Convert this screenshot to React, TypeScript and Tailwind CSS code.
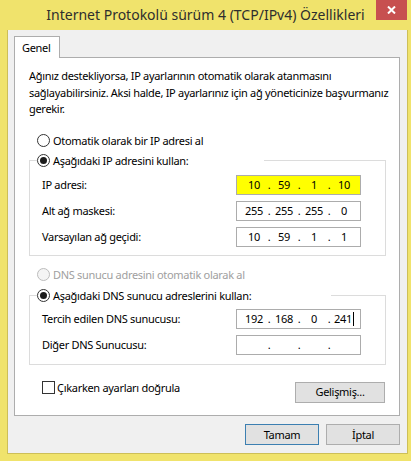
import type { ReactNode } from "react";

function Radio({ checked, disabled }: { checked?: boolean; disabled?: boolean }) {
  return (
    <span
      className={`flex h-[13px] w-[13px] shrink-0 items-center justify-center rounded-full border ${
        disabled ? "border-[#bcbcbc] bg-[#f4f4f4]" : "border-[#333333] bg-white"
      }`}
    >
      {checked ? <span className="h-[7px] w-[7px] rounded-full bg-[#1c1c1c]" /> : null}
    </span>
  );
}

function IpBox({ parts, highlight, cursor }: { parts: string[]; highlight?: boolean; cursor?: boolean }) {
  return (
    <div
      className={`grid h-[20px] w-[125px] grid-cols-[26px_4px_26px_4px_26px_4px_26px] items-center border border-[#acacac] pl-[4px] ${
        highlight ? "bg-[#ffff00]" : "bg-white"
      }`}
    >
      {parts.map((p, i) => (
        <div key={i} className="contents">
          {i > 0 ? <span className="text-center">.</span> : null}
          <span className="flex items-center justify-center">
            {p}
            {cursor && i === 3 ? <span className="ml-px h-[14px] w-px bg-black" /> : null}
          </span>
        </div>
      ))}
    </div>
  );
}

function Row({ label, children }: { label: string; children: ReactNode }) {
  return (
    <div className="grid h-[20px] grid-cols-[194px_125px] items-center">
      <span>{label}</span>
      {children}
    </div>
  );
}

function Button({ children, primary, className = "" }: { children: ReactNode; primary?: boolean; className?: string }) {
  return (
    <div
      className={`flex h-[21px] items-center justify-center border bg-[#e1e1e1] ${
        primary ? "border-[#3c7fb1]" : "border-[#adadad]"
      } ${className}`}
    >
      {children}
    </div>
  );
}

export default function App() {
  return (
    <div className="flex h-[461px] w-[411px] flex-col bg-[#f0e36c] font-['Segoe_UI','Noto_Sans',sans-serif] text-[11px] leading-[16px] tracking-[-0.3px] text-black">
      {/* title bar */}
      <div className="grid h-[30px] shrink-0 grid-cols-[1fr_auto_1fr]">
        <div />
        <div className="flex items-center whitespace-nowrap text-[14px] tracking-normal text-[#2e2e2e]">
          Internet Protokolü sürüm 4 (TCP/IPv4) Özellikleri
        </div>
        <div className="flex justify-end pr-[4px]">
          <div className="flex h-[20px] w-[31px] items-center justify-center bg-[#c75050]">
            <svg width="9" height="8" viewBox="0 0 9 8">
              <path d="M1 0.5 L8 7.5 M8 0.5 L1 7.5" stroke="white" strokeWidth="2" />
            </svg>
          </div>
        </div>
      </div>

      {/* dialog body */}
      <div className="mb-[7px] ml-[7px] mr-[3px] flex flex-1 flex-col border-x border-b border-[#cdbf58] bg-[#f0f0f0]">
        <div className="ml-[6px] mr-[7px] mt-[6px] flex flex-col">
          {/* tab strip */}
          <div className="flex h-[22px]">
            <div className="w-[46px] border-x border-t border-[#adadad] bg-white pl-[7px] pt-[3px]">Genel</div>
            <div className="flex-1 border-b border-[#adadad]" />
          </div>

          {/* panel */}
          <div className="flex h-[358px] flex-col border-x border-b border-[#adadad] bg-white pl-[14px] pt-[10px]">
            <p className="whitespace-nowrap leading-[16.5px]">
              Ağınız destekliyorsa, IP ayarlarının otomatik olarak atanmasını
              <br />
              sağlayabilirsiniz. Aksi halde, IP ayarlarınız için ağ yöneticinize başvurmanız
              <br />
              gerekir.
            </p>

            <div className="mt-[13px] flex h-[20px] items-center gap-[3px] pl-[8px]">
              <Radio />
              <span>Otomatik olarak bir IP adresi al</span>
            </div>

            <fieldset className="w-[357px] border border-[#dcdcdc] pb-[8px] pl-[12px] pt-[4px]">
              <legend className="ml-[-5px] flex h-[20px] w-[227px] items-center gap-[3px]">
                <Radio checked />
                <span>Aşağıdaki IP adresini kullan:</span>
              </legend>
              <div className="flex flex-col gap-[6px]">
                <Row label="IP adresi:">
                  <IpBox parts={["10", "59", "1", "10"]} highlight />
                </Row>
                <Row label="Alt ağ maskesi:">
                  <IpBox parts={["255", "255", "255", "0"]} />
                </Row>
                <Row label="Varsayılan ağ geçidi:">
                  <IpBox parts={["10", "59", "1", "1"]} />
                </Row>
              </div>
            </fieldset>

            <div className="mt-[9px] flex h-[20px] items-center gap-[3px] pl-[8px] text-[#a0a0a0]">
              <Radio disabled />
              <span>DNS sunucu adresini otomatik olarak al</span>
            </div>

            <fieldset className="mt-px w-[357px] border border-[#dcdcdc] pb-[9px] pl-[12px] pt-[3px]">
              <legend className="ml-[-5px] flex h-[20px] w-[294px] items-center gap-[3px]">
                <Radio checked />
                <span>Aşağıdaki DNS sunucu adreslerini kullan:</span>
              </legend>
              <div className="flex flex-col gap-[6px]">
                <Row label="Tercih edilen DNS sunucusu:">
                  <IpBox parts={["192", "168", "0", "241"]} cursor />
                </Row>
                <Row label="Diğer DNS Sunucusu:">
                  <IpBox parts={["", "", "", ""]} />
                </Row>
              </div>
            </fieldset>

            <div className="mt-[17px] flex w-[357px] items-start justify-between pl-[13px] pr-px">
              <div className="mt-[-2px] flex items-center gap-[2px]">
                <span className="h-[13px] w-[13px] border border-[#333333] bg-white" />
                <span>Çıkarken ayarları doğrula</span>
              </div>
              <Button className="w-[90px]">Gelişmiş...</Button>
            </div>
          </div>
        </div>

        {/* dialog buttons */}
        <div className="mt-[8px] flex justify-end gap-[7px] pr-[7px]">
          <Button primary className="w-[74px]">Tamam</Button>
          <Button className="w-[74px]">İptal</Button>
        </div>
      </div>
    </div>
  );
}
